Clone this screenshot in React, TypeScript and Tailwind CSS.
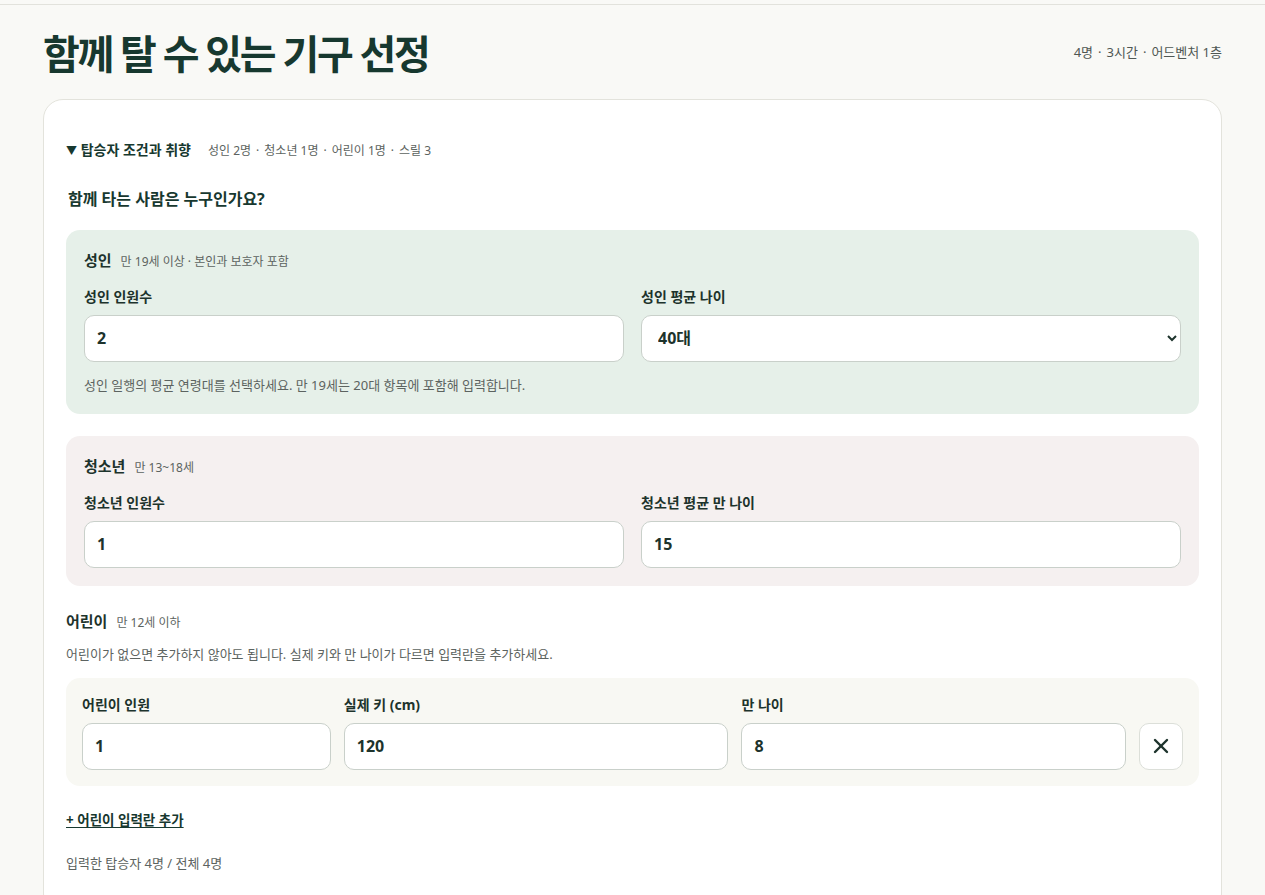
import { useState } from 'react';
import { X } from 'lucide-react';

const font = { fontFamily: '"Noto Sans", "Noto Sans CJK KR", sans-serif' };

const inputCls =
  'h-[47px] w-full rounded-[10px] border border-[#c9d0ca] bg-white px-3 text-[16px] font-bold text-[#1d332c] outline-none';

function Dot() {
  return <span className="mx-[5px]">·</span>;
}

function Field({ label, value, onChange }: { label: string; value: string; onChange: (v: string) => void }) {
  return (
    <label className="flex flex-col gap-[8px]">
      <span className="text-[14px] font-bold text-[#1d332c]">{label}</span>
      <input className={inputCls} value={value} onChange={(e) => onChange(e.target.value)} />
    </label>
  );
}

export default function App() {
  const [adults, setAdults] = useState('2');
  const [adultAge, setAdultAge] = useState('40대');
  const [teens, setTeens] = useState('1');
  const [teenAge, setTeenAge] = useState('15');
  const [kids, setKids] = useState([{ count: '1', height: '120', age: '8' }]);

  const updateKid = (i: number, key: 'count' | 'height' | 'age', v: string) =>
    setKids(kids.map((k, idx) => (idx === i ? { ...k, [key]: v } : k)));

  return (
    <div className="min-h-screen bg-[#f9f9f6] text-[#1d332c]" style={font}>
      <div className="h-[5px] border-b border-[#e2e2dc]" />

      <div className="px-[43px]">
        {/* Header */}
        <div className="flex items-center justify-between pt-[21px]">
          <h1 className="text-[40px] font-bold leading-[56px] tracking-[-2.3px] text-[#17382f]">함께 탈 수 있는 기구 선정</h1>
          <span className="mb-[2px] text-[13px] text-[#4f5753]">
            4명<Dot />3시간<Dot />어드벤처 1층
          </span>
        </div>

        {/* Card */}
        <div className="mt-[17px] rounded-[20px] border border-[#e3e3dc] bg-white px-[22px] pb-[40px] pt-[39px]">
          <div className="flex items-baseline gap-[17px]">
            <span className="text-[14px] font-bold text-[#17382f]">
              <span className="text-[11px]">▼</span> 탑승자 조건과 취향
            </span>
            <span className="text-[12px] text-[#5c6360]">
              성인 2명<Dot />청소년 1명<Dot />어린이 1명<Dot />스릴 3
            </span>
          </div>

          <h2 className="mt-[27px] pl-[2px] text-[16px] font-bold text-[#17382f]">함께 타는 사람은 누구인가요?</h2>

          {/* Adults */}
          <section className="mt-[19px] rounded-[14px] bg-[#e6f0e9] px-[18px] pb-[19px] pt-[19px]">
            <div className="flex items-baseline gap-[9px]">
              <span className="text-[15px] font-bold">성인</span>
              <span className="text-[12px] text-[#5c6360]">만 19세 이상 · 본인과 보호자 포함</span>
            </div>
            <div className="mt-[14px] grid grid-cols-2 gap-[17px]">
              <Field label="성인 인원수" value={adults} onChange={setAdults} />
              <label className="flex flex-col gap-[8px]">
                <span className="text-[14px] font-bold text-[#1d332c]">성인 평균 나이</span>
                <select
                  className="h-[47px] w-full rounded-[10px] border border-[#c9d0ca] bg-white px-3 text-[16px] font-bold text-[#1d332c] outline-none"
                  value={adultAge}
                  onChange={(e) => setAdultAge(e.target.value)}
                >
                  <option>20대</option>
                  <option>30대</option>
                  <option>40대</option>
                  <option>50대</option>
                  <option>60대 이상</option>
                </select>
              </label>
            </div>
            <p className="mt-[14px] text-[13px] text-[#5c6360]">
              성인 일행의 평균 연령대를 선택하세요. 만 19세는 20대 항목에 포함해 입력합니다.
            </p>
          </section>

          {/* Teens */}
          <section className="mt-[22px] rounded-[14px] bg-[#f5f0f0] px-[18px] pb-[18px] pt-[19px]">
            <div className="flex items-baseline gap-[9px]">
              <span className="text-[15px] font-bold">청소년</span>
              <span className="text-[12px] text-[#5c6360]">만 13~18세</span>
            </div>
            <div className="mt-[14px] grid grid-cols-2 gap-[17px]">
              <Field label="청소년 인원수" value={teens} onChange={setTeens} />
              <Field label="청소년 평균 만 나이" value={teenAge} onChange={setTeenAge} />
            </div>
          </section>

          {/* Kids */}
          <section className="mt-[24px]">
            <div className="flex items-baseline gap-[9px]">
              <span className="text-[15px] font-bold">어린이</span>
              <span className="text-[12px] text-[#5c6360]">만 12세 이하</span>
            </div>
            <p className="mt-[13px] text-[13px] text-[#5c6360]">
              어린이가 없으면 추가하지 않아도 됩니다. 실제 키와 만 나이가 다르면 입력란을 추가하세요.
            </p>
            <div className="mt-[13px] flex flex-col gap-3">
              {kids.map((k, i) => (
                <div
                  key={i}
                  className="grid grid-cols-[249fr_385fr_385fr_44px] items-end gap-[13px] rounded-[14px] bg-[#f8f8f3] px-4 pb-[16px] pt-[16px]"
                >
                  <Field label="어린이 인원" value={k.count} onChange={(v) => updateKid(i, 'count', v)} />
                  <Field label="실제 키 (cm)" value={k.height} onChange={(v) => updateKid(i, 'height', v)} />
                  <Field label="만 나이" value={k.age} onChange={(v) => updateKid(i, 'age', v)} />
                  <button
                    className="flex h-[47px] w-[44px] items-center justify-center rounded-[10px] border border-[#dcdfd9] bg-white text-[#1d332c]"
                    onClick={() => setKids(kids.filter((_, idx) => idx !== i))}
                  >
                    <X size={24} strokeWidth={2.4} />
                  </button>
                </div>
              ))}
            </div>
            <button
              className="mt-[24px] text-[13.5px] font-bold text-[#17382f] underline underline-offset-2"
              onClick={() => setKids([...kids, { count: '1', height: '', age: '' }])}
            >
              + 어린이 입력란 추가
            </button>
            <p className="mt-[23px] text-[13px] text-[#5c6360]">입력한 탑승자 4명 / 전체 4명</p>
          </section>
        </div>
      </div>
    </div>
  );
}
